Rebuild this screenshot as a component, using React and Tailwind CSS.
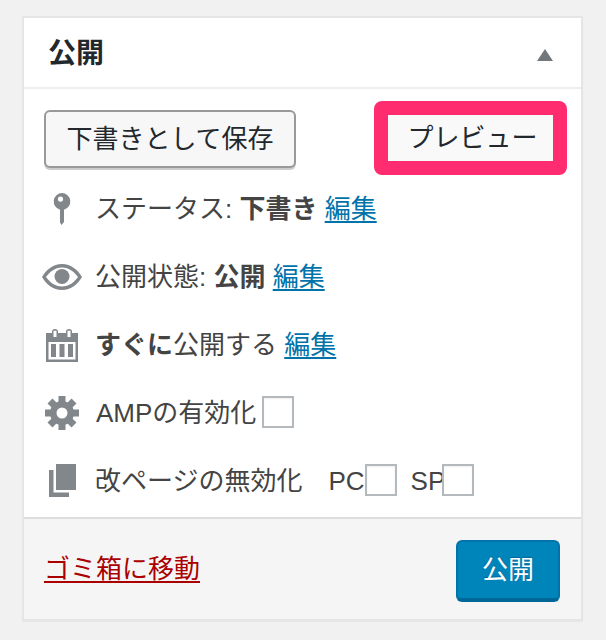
const font = { fontFamily: '"Liberation Sans","Noto Sans CJK JP",sans-serif' };

function Pin() {
  return (
    <svg width="20" height="32" viewBox="0 0 20 32" className="block">
      <path fillRule="evenodd" fill="#82878c" d="M10 0a8.500 8.500 0 0 1 2 16.700V29L9.500 32 8 29.500V16.700A8.500 8.500 0 0 1 10 0zM8.500 3.500a2.600 2.600 0 1 0 0 5.200 2.600 2.600 0 0 0 0-5.200z" />
    </svg>
  );
}
function Eye() {
  return (
    <svg width="40" height="26" viewBox="0 0 40 26" className="block">
      <path fillRule="evenodd" fill="#82878c" d="M20 0C11 0 4 6 0 13c4 7 11 13 20 13s16-6 20-13C36 6 29 0 20 0zM20 3.500c7 0 12.500 4.500 16 9.500-3.500 5-9 9.500-16 9.500S7.500 18 4 13C7.500 8 13 3.500 20 3.500z" />
      <circle cx="20" cy="12.500" r="7.500" fill="#82878c" />
    </svg>
  );
}
function Calendar() {
  return (
    <svg width="32" height="33" viewBox="0 0 32 33" className="block">
      <path fillRule="evenodd" fill="#82878c" d="M0 4h6V2.500a3 2.500 0 0 1 6 0V4h8V2.500a3 2.500 0 0 1 6 0V4h6v29H0zM2.500 13v17.500h27V13zM7.500 1.800V8h3V1.800zM21.500 1.800V8h3V1.800z" />
      <rect x="5" y="15" width="5" height="13" fill="#82878c" />
      <rect x="13.500" y="15" width="5" height="13" fill="#82878c" />
      <rect x="22" y="15" width="5" height="13" fill="#82878c" />
    </svg>
  );
}
function Gear() {
  const teeth = [0, 45, 90, 135, 180, 225, 270, 315];
  return (
    <svg width="34" height="34" viewBox="0 0 34 34" className="block">
      {teeth.map((a) => (
        <rect key={a} x="13.500" y="0" width="7" height="8" fill="#82878c" transform={`rotate(${a} 17 17)`} />
      ))}
      <path fillRule="evenodd" fill="#82878c" d="M17 5a12 12 0 1 0 0 24 12 12 0 0 0 0-24zM17 11.500a5.500 5.500 0 1 1 0 11 5.500 5.500 0 0 1 0-11z" />
    </svg>
  );
}
function Pages() {
  return (
    <svg width="27" height="33" viewBox="0 0 27 33" className="block">
      <rect x="7" y="0" width="20" height="26" fill="#82878c" />
      <path fill="#82878c" d="M0 6h4.500v22.500H20V33H0z" />
    </svg>
  );
}
function Box({ className = "" }) {
  return <span className={`inline-block align-top mt-[1px] w-[32px] h-[32px] border-2 border-[#b4b9be] bg-white shadow-[inset_0_1px_2px_rgba(0,0,0,0.07)] ${className}`} />;
}
function Edit() {
  return <a className="text-[#0073aa] underline decoration-2 underline-offset-[3px]">編集</a>;
}
function Row({ icon, children, h }) {
  return (
    <div className={`flex items-center ${h}`}>
      <div className="w-[76px] flex justify-center shrink-0 mr-[-5px]">{icon}</div>
      <div className="whitespace-pre">{children}</div>
    </div>
  );
}

export default function App() {
  return (
    <div className="w-[606px] h-[640px] bg-[#f1f1f1] pt-[16px] pl-[22px] text-[26px] leading-[36px] text-[#444]" style={font}>
      <div className="w-[561px] h-[605px] bg-white border-2 border-[#e5e5e5] flex flex-col shadow-[0_1px_1px_rgba(0,0,0,0.04)]">
        <div className="h-[71px] flex items-center justify-between pl-[24px] pr-[28px] border-b-2 border-[#eeeeee] shrink-0">
          <span className="text-[28px] font-bold text-[#23282d] mt-[3px]">公開</span>
          <span className="w-0 h-0 border-x-[8px] border-x-transparent border-b-[12px] border-b-[#72777c] mt-[4px]" />
        </div>
        <div className="flex-1 flex flex-col">
          <div className="flex items-start justify-between pl-[20px] pr-[14px] pt-[12px] h-[86px] shrink-0">
            <button className="mt-[9px] w-[252px] h-[58px] rounded-[6px] border-2 border-[#999] bg-[#f7f7f7] shadow-[0_2px_0_#ccc] text-[#23282d] text-[26px] flex items-center justify-center">下書きとして保存</button>
            <button className="w-[193px] h-[74px] rounded-[8px] border-[14px] border-[#ff2d6f] bg-[#f9f9f9] text-[#23282d] text-[26px] flex items-center justify-center pl-[4px] pb-[1px]">プレビュー</button>
          </div>
          <Row h="h-[68px]" icon={<Pin />}>ステータス: <b>下書き</b> <Edit /></Row>
          <Row h="h-[68px]" icon={<Eye />}>公開状態: <b>公開</b> <Edit /></Row>
          <Row h="h-[68px]" icon={<Calendar />}><b>すぐに</b>公開する <Edit /></Row>
          <Row h="h-[68px]" icon={<Gear />}><span className="ml-[1px]">AMPの有効化</span> <Box className="ml-[-2px]" /></Row>
          <Row h="h-[67px]" icon={<Pages />}>改ページの無効化<span className="ml-[26px]">PC</span><Box /><span className="ml-[14px]">SP</span><Box className="ml-[-3px]" /></Row>
        </div>
        <div className="h-[102px] shrink-0 border-t-2 border-[#dddddd] bg-[#f5f5f5] flex items-center justify-between pl-[20px] pr-[21px]">
          <a className="text-[#a00] underline decoration-2 underline-offset-[3px] mb-[1px]">ゴミ箱に移動</a>
          <button className="mt-[4px] w-[104px] h-[62px] rounded-[6px] bg-[#0085ba] border-2 border-[#0073aa] border-b-[4px] border-b-[#006799] text-white text-[26px] [text-shadow:0_-1px_1px_#006799] flex items-center justify-center">公開</button>
        </div>
      </div>
    </div>
  );
}
